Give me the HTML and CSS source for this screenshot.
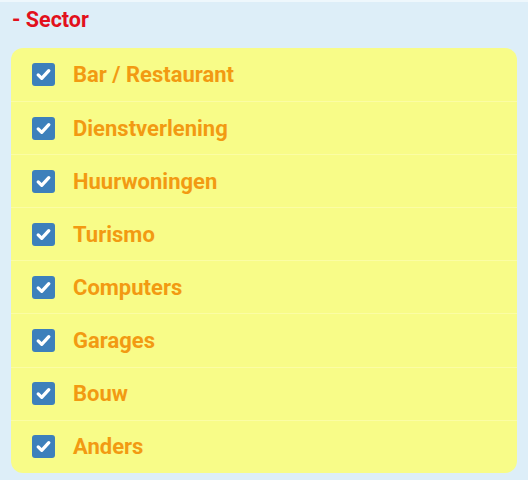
FILE: index.html
```html
<!DOCTYPE html>
<html>
<head>
<meta charset="utf-8">
<link rel="stylesheet" href="styles.css">
</head>
<body>
<div class="page">
  <h2 class="title">- Sector</h2>
  <ul class="panel">
    <li class="row"><span class="box"><svg viewBox="0 0 24 24" width="17" height="17"><path d="M4.5 12.5 L9.5 17.5 L19.5 6.5" fill="none" stroke="#fff" stroke-width="4.6" stroke-linecap="round" stroke-linejoin="round"/></svg></span><span class="label">Bar / Restaurant</span></li>
    <li class="row"><span class="box"><svg viewBox="0 0 24 24" width="17" height="17"><path d="M4.5 12.5 L9.5 17.5 L19.5 6.5" fill="none" stroke="#fff" stroke-width="4.6" stroke-linecap="round" stroke-linejoin="round"/></svg></span><span class="label">Dienstverlening</span></li>
    <li class="row"><span class="box"><svg viewBox="0 0 24 24" width="17" height="17"><path d="M4.5 12.5 L9.5 17.5 L19.5 6.5" fill="none" stroke="#fff" stroke-width="4.6" stroke-linecap="round" stroke-linejoin="round"/></svg></span><span class="label">Huurwoningen</span></li>
    <li class="row"><span class="box"><svg viewBox="0 0 24 24" width="17" height="17"><path d="M4.5 12.5 L9.5 17.5 L19.5 6.5" fill="none" stroke="#fff" stroke-width="4.6" stroke-linecap="round" stroke-linejoin="round"/></svg></span><span class="label">Turismo</span></li>
    <li class="row"><span class="box"><svg viewBox="0 0 24 24" width="17" height="17"><path d="M4.5 12.5 L9.5 17.5 L19.5 6.5" fill="none" stroke="#fff" stroke-width="4.6" stroke-linecap="round" stroke-linejoin="round"/></svg></span><span class="label">Computers</span></li>
    <li class="row"><span class="box"><svg viewBox="0 0 24 24" width="17" height="17"><path d="M4.5 12.5 L9.5 17.5 L19.5 6.5" fill="none" stroke="#fff" stroke-width="4.6" stroke-linecap="round" stroke-linejoin="round"/></svg></span><span class="label">Garages</span></li>
    <li class="row"><span class="box"><svg viewBox="0 0 24 24" width="17" height="17"><path d="M4.5 12.5 L9.5 17.5 L19.5 6.5" fill="none" stroke="#fff" stroke-width="4.6" stroke-linecap="round" stroke-linejoin="round"/></svg></span><span class="label">Bouw</span></li>
    <li class="row"><span class="box"><svg viewBox="0 0 24 24" width="17" height="17"><path d="M4.5 12.5 L9.5 17.5 L19.5 6.5" fill="none" stroke="#fff" stroke-width="4.6" stroke-linecap="round" stroke-linejoin="round"/></svg></span><span class="label">Anders</span></li>
  </ul>
</div>
</body>
</html>
```
FILE: styles.css
```css
html, body {
  margin: 0;
  padding: 0;
  background: #ddeef8;
}
body {
  font-family: Roboto, "Liberation Sans", sans-serif;
}
.page {
  width: 528px;
  height: 480px;
  box-sizing: border-box;
  border-top: 2px solid #eef7fc;
  padding: 0 11px 0 11px;
}
.title {
  margin: 0;
  height: 46px;
  padding-top: 5px;
  padding-left: 1px;
  box-sizing: border-box;
  font-size: 21.5px;
  font-weight: 700;
  color: #e2101c;
  line-height: 25px;
}
.panel {
  list-style: none;
  margin: 0;
  padding: 0;
  background: #f8fc88;
  border-radius: 12px;
  width: 506px;
  overflow: hidden;
}
.row {
  display: flex;
  align-items: center;
  height: 53.1px;
  padding-left: 21px;
  box-sizing: border-box;
  border-top: 1px solid #fbfda4;
}
.row:first-child {
  border-top: none;
}
.box {
  width: 23px;
  height: 23px;
  border-radius: 3px;
  background: #3d80bb;
  display: flex;
  align-items: center;
  justify-content: center;
  margin-right: 18px;
}
.box svg {
  display: block;
}
.label {
  font-size: 22px;
  font-weight: 700;
  color: #f29a12;
}
```
